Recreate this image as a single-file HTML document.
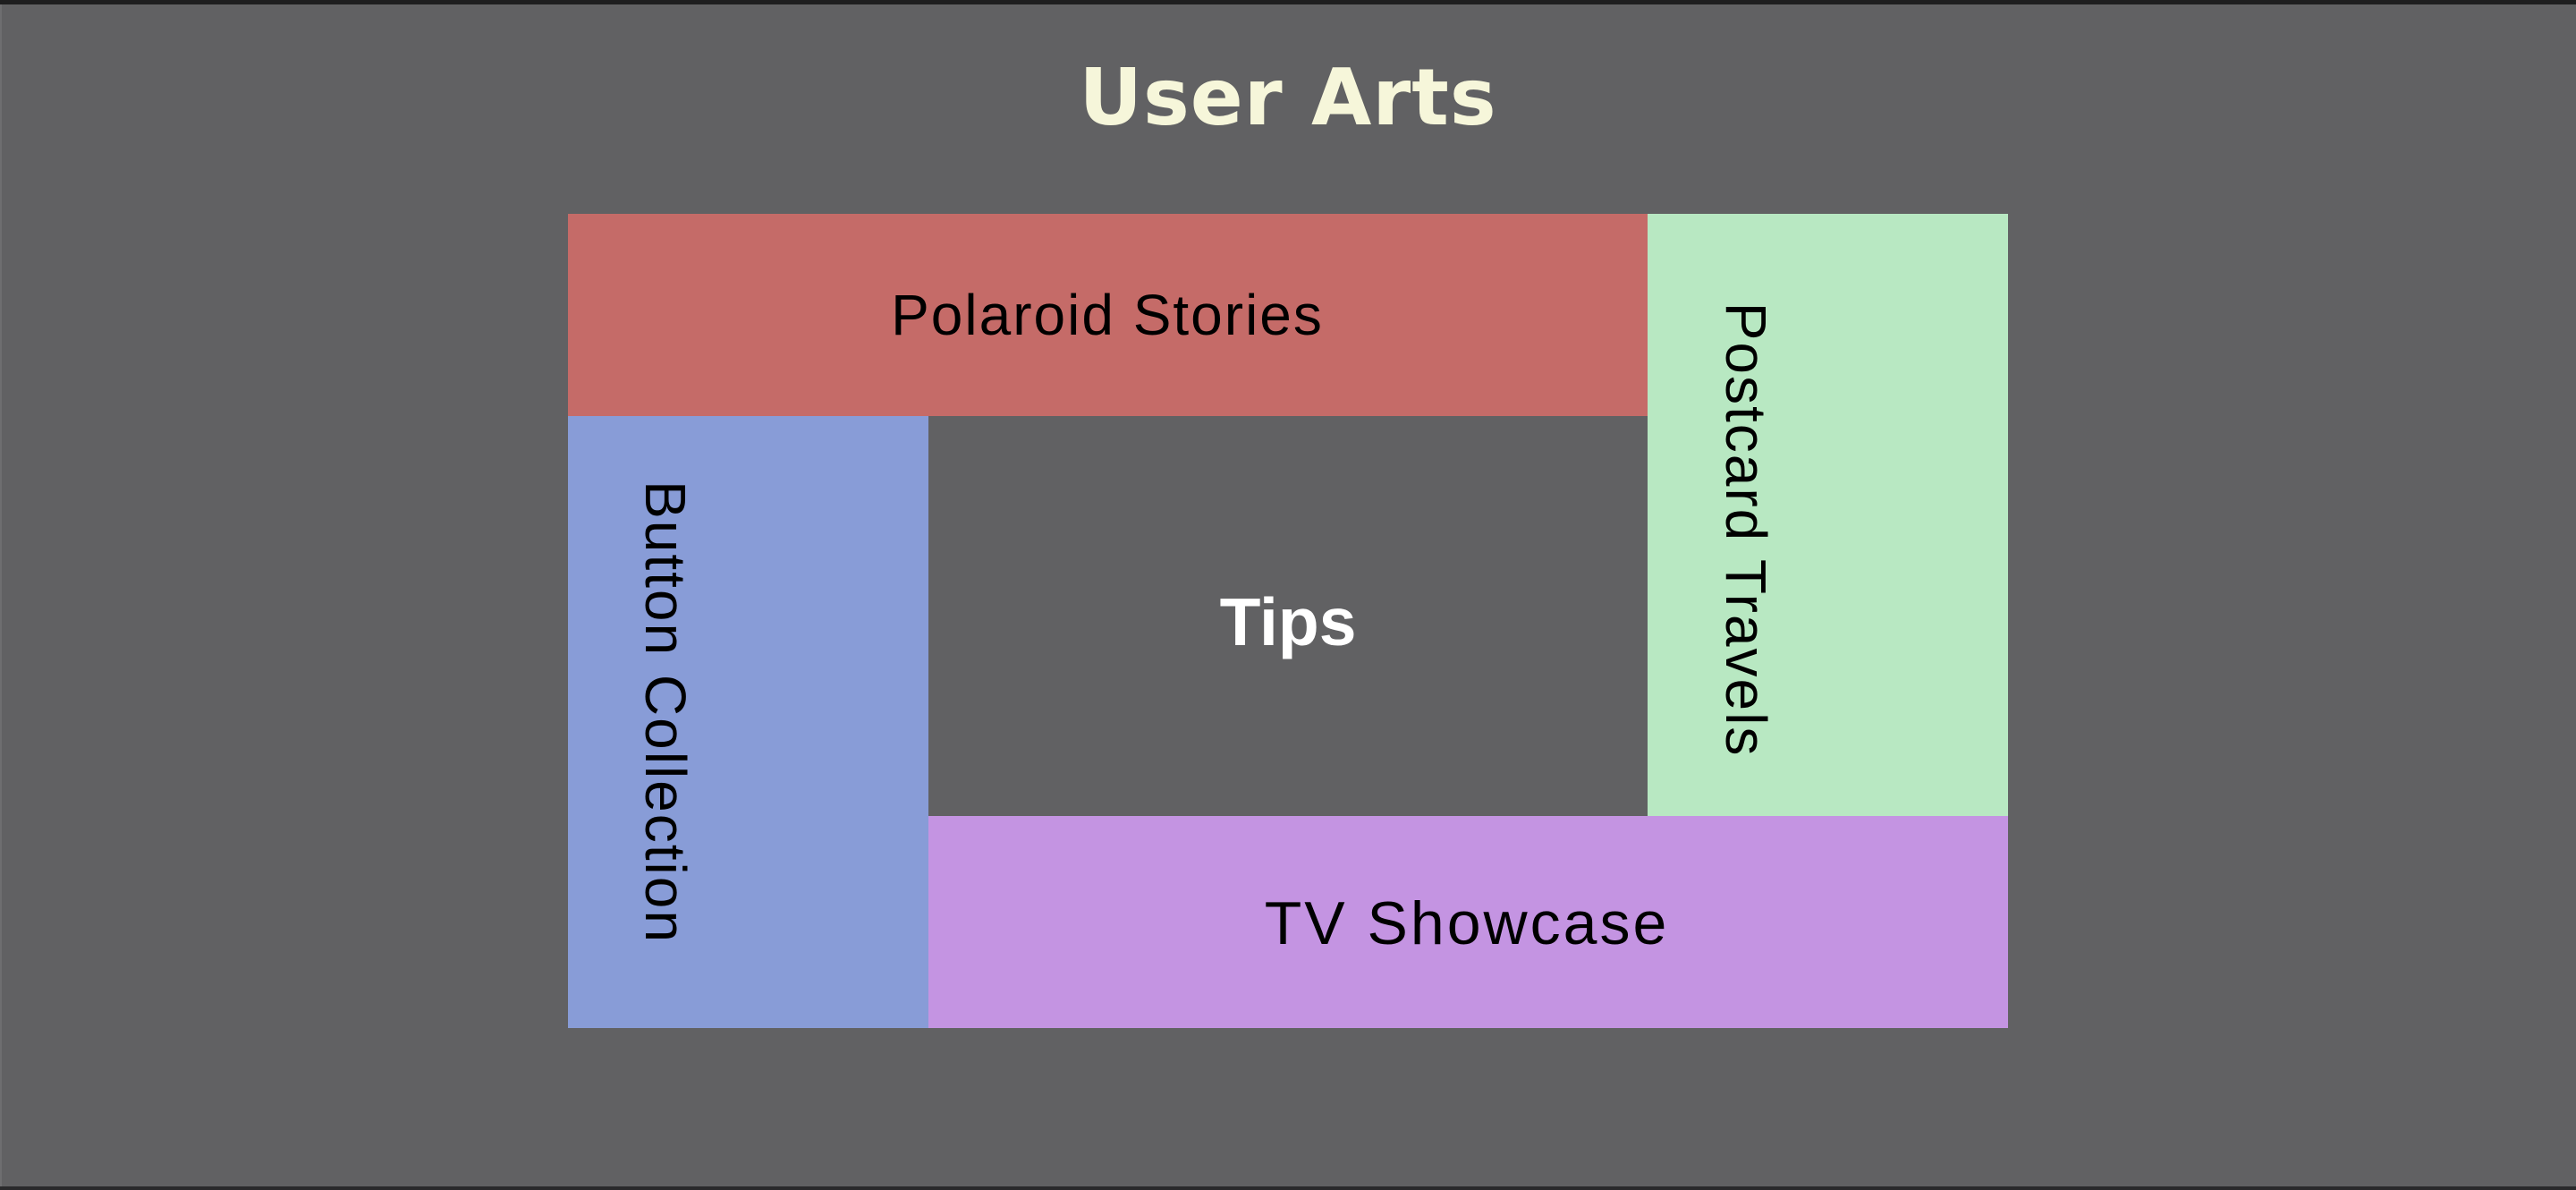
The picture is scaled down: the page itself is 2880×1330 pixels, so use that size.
<!DOCTYPE html>
<html><head><meta charset="utf-8"><style>
html,body{margin:0;padding:0;}
body{width:2880px;height:1330px;background:#616163;position:relative;overflow:hidden;font-family:"Liberation Sans",sans-serif;}
.topbar{position:absolute;left:0;top:0;width:2880px;height:5px;background:#1e1e1f;}
.botbar{position:absolute;left:0;bottom:0;width:2880px;height:4px;background:#2a2a2c;}
.lb{position:absolute;left:0;top:5px;width:2px;height:1321px;background:#6e6e70;}
h1{position:absolute;left:0;width:2880px;top:58px;margin:0;text-align:center;font-family:"DejaVu Sans",sans-serif;font-weight:bold;font-size:87px;color:#f6f6da;letter-spacing:1px;}
.box{position:absolute;}
.t{position:absolute;white-space:nowrap;color:#000;font-size:64px;letter-spacing:2px;transform:translate(-50%,-50%);}
.v{transform:translate(-50%,-50%) rotate(90deg);}
</style></head><body>
<div class="topbar"></div><div class="lb"></div><div class="botbar"></div>
<h1>User Arts</h1>
<div class="box" style="left:635px;top:239px;width:1207px;height:226px;background:#c56b68;"></div>
<div class="box" style="left:1842px;top:239px;width:403px;height:673px;background:#b8e8c2;"></div>
<div class="box" style="left:635px;top:465px;width:403px;height:684px;background:#889cd7;"></div>
<div class="box" style="left:1038px;top:912px;width:1207px;height:237px;background:#c494e2;"></div>
<div class="t" style="left:1238px;top:352px;">Polaroid Stories</div>
<div class="t v" style="left:1952px;top:592px;">Postcard Travels</div>
<div class="t v" style="left:744px;top:796px;">Button Collection</div>
<div class="t" style="left:1640px;top:1032px;font-size:68px;letter-spacing:3px;">TV Showcase</div>
<div class="t" style="left:1440px;top:695px;color:#fff;font-weight:bold;font-size:75px;letter-spacing:0;">Tips</div>
</body></html>
